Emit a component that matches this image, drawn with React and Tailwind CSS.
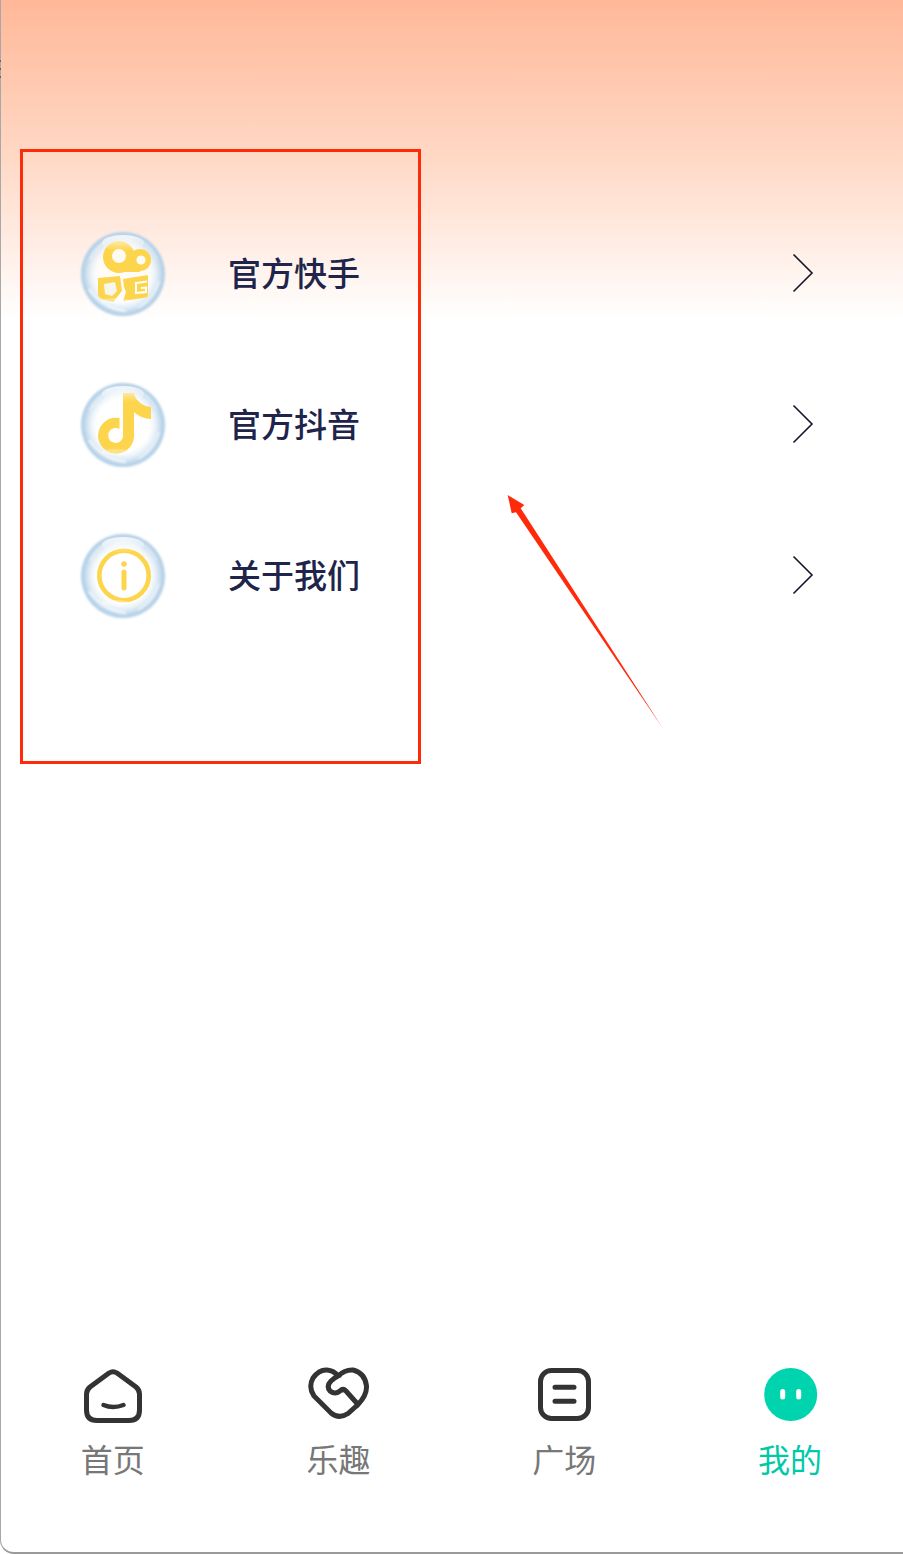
import React from "react";

const Bubble = ({ id, children }) => (
  <svg width="90" height="90" viewBox="-2 -2 90 90" className="shrink-0">
    <defs>
      <filter id={`${id}-soft`} x="-10%" y="-10%" width="120%" height="120%">
        <feGaussianBlur stdDeviation="0.9" />
      </filter>
      <radialGradient id={`${id}-glass`} cx="50%" cy="50%" r="50%">
        <stop offset="0%" stopColor="#ffffff" stopOpacity="0.6" />
        <stop offset="62%" stopColor="#ffffff" stopOpacity="0.7" />
        <stop offset="76%" stopColor="#e6f0f8" stopOpacity="0.85" />
        <stop offset="90%" stopColor="#c0d8eb" />
        <stop offset="97%" stopColor="#aecce5" />
        <stop offset="100%" stopColor="#cfe2f0" stopOpacity="0.4" />
      </radialGradient>
      <linearGradient id={`${id}-shine`} x1="0" y1="0" x2="0" y2="1">
        <stop offset="0%" stopColor="#ffffff" stopOpacity="0.8" />
        <stop offset="100%" stopColor="#ffffff" stopOpacity="0" />
      </linearGradient>
    </defs>
    <circle cx="43" cy="43" r="42.5" fill={`url(#${id}-glass)`} filter={`url(#${id}-soft)`} />
    {children}
    {/* highlights and flecks over the icon */}
    <ellipse cx="43" cy="12" rx="21" ry="8" fill={`url(#${id}-shine)`} />
    <ellipse cx="36" cy="70" rx="15" ry="3" fill="#ffffff" opacity="0.3" />
    <g fill="none" stroke="#ffffff" filter={`url(#${id}-soft)`}>
      <path d="M9 58 Q22 77 46 80" strokeWidth="2.4" opacity="0.7" />
      <path d="M58 77 Q74 68 79 50" strokeWidth="2" opacity="0.6" />
      <path d="M10 28 Q17 14 31 7" strokeWidth="2" opacity="0.45" />
      <path d="M62 10 Q72 17 77 28" strokeWidth="1.6" opacity="0.4" />
    </g>
  </svg>
);

const KuaishouIcon = () => (
  <Bubble id="ks">
    <circle cx="39" cy="26" r="16" fill="#fdd54c" />
    <circle cx="60" cy="29" r="11" fill="#fdd54c" />
    <rect x="39" y="29" width="21" height="12" fill="#fdd54c" />
    <circle cx="39" cy="25" r="7" fill="#fdfbf4" />
    <circle cx="61" cy="29" r="4.6" fill="#fdfbf4" />
    <path d="M18 47 L40 45 L42 60 L33 71 L22 68 Q18 67 18 63 Z" fill="#fdd54c" />
    <path d="M24 53 L35 51 L37 60 L32 65 L25 63 Z" fill="#f7f6ec" />
    <path d="M43 48 L68 44 L68 64 Q68 66 66 66.5 L43 70 L46 61 L44 56 Z" fill="#fdd54c" />
    <path d="M67 50.5 L56 52 V62 L66 61 V56.5 L61 57" fill="none" stroke="#ffffff" strokeWidth="2" />
  </Bubble>
);

const DouyinIcon = () => (
  <Bubble id="dy">
    <path
      fillRule="evenodd"
      d="M43 11 H54 C55 18 62 24 71 25 V37 C65 37 58 34 54 30 V55 A18 18 0 1 1 39.5 36 V47 A7.5 7.5 0 1 0 43 55 Z"
      fill="#fdd54c"
    />
  </Bubble>
);

const InfoIcon = () => (
  <Bubble id="info">
    <circle cx="44" cy="42.5" r="24.7" fill="none" stroke="#fdd54c" strokeWidth="4.6" />
    <circle cx="44" cy="31" r="2.8" fill="#fdd54c" />
    <path d="M44 39 V55" stroke="#fdd54c" strokeWidth="5" strokeLinecap="round" />
  </Bubble>
);

const Chevron = () => (
  <svg width="22" height="40" viewBox="0 0 22 40" fill="none" className="shrink-0">
    <path d="M1.5 1.5 L20 20 L1.5 38.5" stroke="#15152b" strokeWidth="1.6" />
  </svg>
);

const HomeIcon = () => (
  <svg width="64" height="56" viewBox="0 0 64 56" fill="none" stroke="#333333" strokeWidth="5">
    <path
      d="M28 6 Q32 3.5 36 6 L55 20 Q58.5 23 58.5 27 V43 Q58.5 53.5 48 53.5 H16 Q5.5 53.5 5.5 43 V27 Q5.5 23 9 20 Z"
      strokeLinejoin="round"
    />
    <path d="M22.5 38 Q32 42 42.5 38" strokeWidth="4.5" strokeLinecap="round" />
  </svg>
);

const FunIcon = () => (
  <svg width="64" height="56" viewBox="0 0 64 56" fill="none" stroke="#333333" strokeWidth="5" strokeLinecap="round">
    <path d="M51 37.5 L41 46.5 Q32 52.5 24 46 L7 29 Q1 20 6 11 Q12 2.5 20 3 Q27 3.5 31 9 Q27 11 24 14 Q19 19 23 24 Q28 28 33 24 Q36 21 39 24 L51 37.5 Q60 28 59.5 19 Q58 6 46 3 Q38 2.5 31 9" />
  </svg>
);

const SquareIcon = () => (
  <svg width="64" height="56" viewBox="0 0 64 56" fill="none" stroke="#333333" strokeWidth="5" strokeLinecap="round">
    <rect x="8.5" y="3.5" width="48" height="48" rx="11" />
    <path d="M23 20.3 H42 M23 34.3 H42" />
  </svg>
);

const MineIcon = () => (
  <svg width="64" height="56" viewBox="0 0 64 56">
    <circle cx="32.7" cy="27.5" r="26.5" fill="#00d4ae" />
    <rect x="22.2" y="22" width="5" height="10.5" rx="2.5" fill="#ffffff" />
    <rect x="38.2" y="22" width="5" height="10.5" rx="2.5" fill="#ffffff" />
  </svg>
);

const rows = [
  { label: "官方快手", icon: <KuaishouIcon /> },
  { label: "官方抖音", icon: <DouyinIcon /> },
  { label: "关于我们", icon: <InfoIcon /> },
];

const tabs = [
  { label: "首页", icon: <HomeIcon /> },
  { label: "乐趣", icon: <FunIcon /> },
  { label: "广场", icon: <SquareIcon /> },
  { label: "我的", icon: <MineIcon />, active: true },
];

export default function App() {
  return (
    <div className="relative w-[903px] h-[1554px] overflow-hidden bg-white font-['Noto_Sans_CJK_SC','Noto_Sans',sans-serif]">
      <div className="flex flex-col h-full border-l border-b-2 border-l-[#a8a8a8] border-b-[#9a9a9a] rounded-bl-[14px] bg-[linear-gradient(to_bottom,#ffb898_0%,#ffd9c6_50%,#ffffff_100%)] bg-[length:100%_320px] bg-no-repeat">
        <div className="flex flex-col pt-[198px]">
          {rows.map((row) => (
            <div key={row.label} className="flex items-center h-[151px] pl-[77px] pr-[89px]">
              {row.icon}
              <span className="ml-[60px] pb-[4px] text-[33px] leading-[44px] font-medium text-[#20234a]">
                {row.label}
              </span>
              <span className="ml-auto pb-[2px] flex">
                <Chevron />
              </span>
            </div>
          ))}
        </div>

        <div className="mt-auto -ml-px grid grid-cols-4 pb-[72px]">
          {tabs.map((tab) => (
            <div key={tab.label} className="flex flex-col items-center gap-[13px]">
              {tab.icon}
              <span
                className={`text-[32px] leading-[44px] ${
                  tab.active ? "text-[#00c9a7]" : "text-[#777777]"
                }`}
              >
                {tab.label}
              </span>
            </div>
          ))}
        </div>
      </div>

      {/* small marks on the window edge */}
      <div className="absolute left-0 top-[60px] flex flex-col gap-[6px]">
        <div className="w-px h-[2px] bg-[#666666]" />
        <div className="w-px h-[2px] bg-[#666666]" />
        <div className="w-px h-[2px] bg-[#666666]" />
      </div>

      {/* red annotation over the page */}
      <div className="absolute left-[20px] top-[149px] w-[401px] h-[615px] border-[3px] border-[#ff2a0a]" />
      <svg className="absolute left-[500px] top-[490px]" width="175" height="245" viewBox="0 0 175 245">
        <defs>
          <linearGradient id="arrow-fade" x1="0" y1="0" x2="1" y2="1">
            <stop offset="95%" stopColor="#ff2a0a" />
            <stop offset="100%" stopColor="#ff2a0a" stopOpacity="0.3" />
          </linearGradient>
        </defs>
        <polygon
          points="7.7,5 24.3,15 20.7,18.3 164,240 16,22.3 11.7,23.3"
          fill="url(#arrow-fade)"
        />
      </svg>
    </div>
  );
}
